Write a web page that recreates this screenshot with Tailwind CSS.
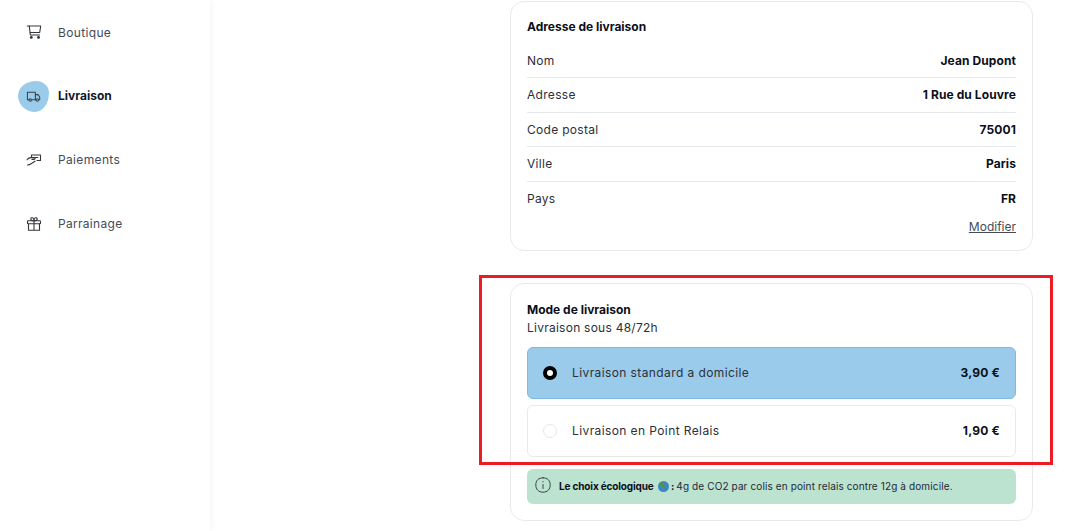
<!doctype html>
<html lang="fr">
<head>
<meta charset="utf-8">
<script src="https://cdn.jsdelivr.net/npm/@tailwindcss/browser@4"></script>
<title>Livraison</title>
</head>
<body class="bg-white font-['Inter',sans-serif] text-[#111827] overflow-hidden">
<div class="relative flex h-[531px] w-[1078px] overflow-hidden">
  <aside class="w-[210px] shrink-0 h-full bg-white pl-[18px] pt-[16px] flex flex-col gap-[32px] shadow-[2px_0_6px_rgba(0,0,0,0.04)]">
    <a class="flex items-center h-[32px] gap-[9px] text-[12px] tracking-[0.35px] text-[#444b57]">
      <span class="w-[31px] h-[31px] flex items-center justify-center">
        <svg width="16" height="16" viewBox="0 0 16 16" fill="none" stroke="#33383f" stroke-width="1.100" stroke-linecap="round" stroke-linejoin="round"><path d="M1.300 2h13.400l-1 6.500H4.200"/><path d="M3.300 2l1 9h9.200"/><circle cx="5.300" cy="13.400" r="0.900" fill="#33383f"/><circle cx="12.500" cy="13.400" r="0.900" fill="#33383f"/></svg>
      </span>
      <span class="mt-[1px]">Boutique</span>
    </a>
    <a class="flex items-center h-[32px] gap-[9px] text-[12px] font-bold tracking-[0] text-[#111827]">
      <span class="w-[31px] h-[31px] flex items-center justify-center bg-[#9acbeb] rounded-[58%_42%_45%_55%/48%_38%_62%_52%]">
        <svg width="15" height="15" viewBox="0 0 16 16" fill="none" stroke="#3a3f47" stroke-width="1.100" stroke-linecap="round" stroke-linejoin="round"><path d="M3 11.500H1.500v-8h8.500v8H6"/><path d="M10 6h2.800l1.800 2.600v2.900h-1.200M10 11.500h.5"/><circle cx="4.500" cy="11.800" r="1.300"/><circle cx="12" cy="11.800" r="1.300"/></svg>
      </span>
      <span>Livraison</span>
    </a>
    <a class="flex items-center h-[32px] gap-[9px] text-[12px] tracking-[0.35px] text-[#444b57]">
      <span class="w-[31px] h-[31px] flex items-center justify-center">
        <svg width="16" height="16" viewBox="0 0 16 16" fill="none" stroke="#33383f" stroke-width="1.100" stroke-linecap="round" stroke-linejoin="round"><path d="M5.500 5.500V3h9v5.500h-3.500"/><path d="M8 5.500h3.800"/><path d="M1 7.800C2 6.300 3.800 5.600 5.300 5.600h2.900c1.200 0 1.200 1.800 0 1.800H6"/><path d="M1.500 13c1.800 0 2.700-.6 4-1.500l3.500-2.300"/></svg>
      </span>
      <span>Paiements</span>
    </a>
    <a class="flex items-center h-[32px] gap-[9px] text-[12px] tracking-[0.3px] text-[#444b57]">
      <span class="w-[31px] h-[31px] flex items-center justify-center">
        <svg width="16" height="16" viewBox="0 0 16 16" fill="none" stroke="#33383f" stroke-width="1.100" stroke-linecap="round" stroke-linejoin="round"><rect x="1.500" y="4.800" width="13" height="3" rx=".6"/><path d="M2.500 7.800v6.400h11V7.800M8 4.800v9.400"/><path d="M8 4.800C6.500 4.800 4.800 4.200 4.800 3s1-1.500 1.800-1.200C7.500 2.200 8 3.500 8 4.800zM8 4.800c1.500 0 3.200-.6 3.200-1.800s-1-1.500-1.800-1.200C8.500 2.200 8 3.500 8 4.800z"/></svg>
      </span>
      <span>Parrainage</span>
    </a>
  </aside>

  <main class="flex-1 pl-[300px] pt-[1px] flex flex-col gap-[32px]">
    <section class="w-[523px] h-[250px] border border-[#e8eaee] rounded-[14px] bg-white px-[16px] pt-[16px]">
      <h2 class="text-[12px] leading-[18px] font-bold tracking-[0] text-[#0b0f19] mb-[7.500px]">Adresse de livraison</h2>
      <div class="text-[12px] tracking-[0.3px] text-[#2b303a]">
        <div class="flex justify-between items-center h-[34.500px] pt-[1px] border-b border-[#e5e8ed]"><span>Nom</span><span class="font-bold tracking-[0.1px] text-[#0b0f19]">Jean Dupont</span></div>
        <div class="flex justify-between items-center h-[34.500px] pt-[1px] border-b border-[#e5e8ed]"><span>Adresse</span><span class="font-bold tracking-[0.1px] text-[#0b0f19]">1 Rue du Louvre</span></div>
        <div class="flex justify-between items-center h-[34.500px] pt-[1px] border-b border-[#e5e8ed]"><span>Code postal</span><span class="font-bold tracking-[0.1px] text-[#0b0f19]">75001</span></div>
        <div class="flex justify-between items-center h-[34.500px] pt-[1px] border-b border-[#e5e8ed]"><span>Ville</span><span class="font-bold tracking-[0.1px] text-[#0b0f19]">Paris</span></div>
        <div class="flex justify-between items-center h-[34.500px] pt-[1px]"><span>Pays</span><span class="font-bold tracking-[0.1px] text-[#0b0f19]">FR</span></div>
      </div>
      <div class="flex justify-end mt-[2px]"><a class="text-[12px] leading-[18px] underline tracking-[0] text-[#444b57]">Modifier</a></div>
    </section>

    <section class="w-[523px] h-[238px] border border-[#e8eaee] rounded-[14px] bg-white px-[16px] pt-[17px]">
      <h2 class="text-[12px] leading-[18px] font-bold tracking-[0] text-[#0b0f19]">Mode de livraison</h2>
      <p class="text-[12px] leading-[18px] tracking-[0.25px] text-[#2b303a] mb-[10px]">Livraison sous 48/72h</p>
      <div class="flex items-center h-[52px] pl-[15px] pr-[15px] rounded-[6px] bg-[#9acbeb] border border-[#7db9e3] mb-[6px]">
        <span class="w-[14px] h-[14px] rounded-full border-[4px] border-black bg-white shrink-0"></span>
        <span class="ml-[15px] text-[12px] tracking-[0.4px] text-[#2b303a]">Livraison standard a domicile</span>
        <span class="ml-auto text-[12px] font-bold tracking-[0.2px] text-[#0b0f19]">3,90 €</span>
      </div>
      <div class="flex items-center h-[52px] pl-[15px] pr-[15px] rounded-[6px] bg-white border border-[#e8eaee] mb-[12px]">
        <span class="w-[14px] h-[14px] rounded-full border border-[#e5e7eb] bg-white shrink-0"></span>
        <span class="ml-[15px] text-[12px] tracking-[0.4px] text-[#2b303a]">Livraison en Point Relais</span>
        <span class="ml-auto text-[12px] font-bold tracking-[0.2px] text-[#0b0f19]">1,90 €</span>
      </div>
      <div class="flex items-center h-[35px] pl-[8px] rounded-[6px] bg-[#bce2d0] text-[10px] text-[#1f2937]">
        <svg class="shrink-0 -mt-[3px]" width="16" height="16" viewBox="0 0 16 16" fill="none" stroke="#3a4450" stroke-width="1" stroke-linecap="round"><path d="M8 .8c4.500 0 7.200 2.700 7.200 7 0 4.600-2.700 7.400-7.200 7.400S.8 12.400.8 7.800C.8 3.500 3.500.8 8 .8z"/><path d="M8 7.500v4M8 4.600v.3"/></svg>
        <span class="ml-[8px] font-bold tracking-[-0.15px] text-[#0b0f19]">Le choix écologique</span>
        <svg class="ml-[4px] shrink-0" width="11" height="11" viewBox="0 0 10 10"><circle cx="5" cy="5" r="5" fill="#3b88c3"/><path d="M3 .8 6 1.500 5 4 6.500 5.500 5 8 3.500 5 1 4z" fill="#5c913b"/></svg>
        <span class="font-bold text-[#0b0f19]">&nbsp;:</span>
        <span class="ml-[2px] tracking-[0.12px]">4g de CO2 par colis en point relais contre 12g à domicile.</span>
      </div>
    </section>
  </main>

  <div class="absolute left-[479px] top-[275px] w-[574px] h-[190px] border-[3px] border-[#ed1c24] pointer-events-none"></div>
</div>
</body>
</html>
